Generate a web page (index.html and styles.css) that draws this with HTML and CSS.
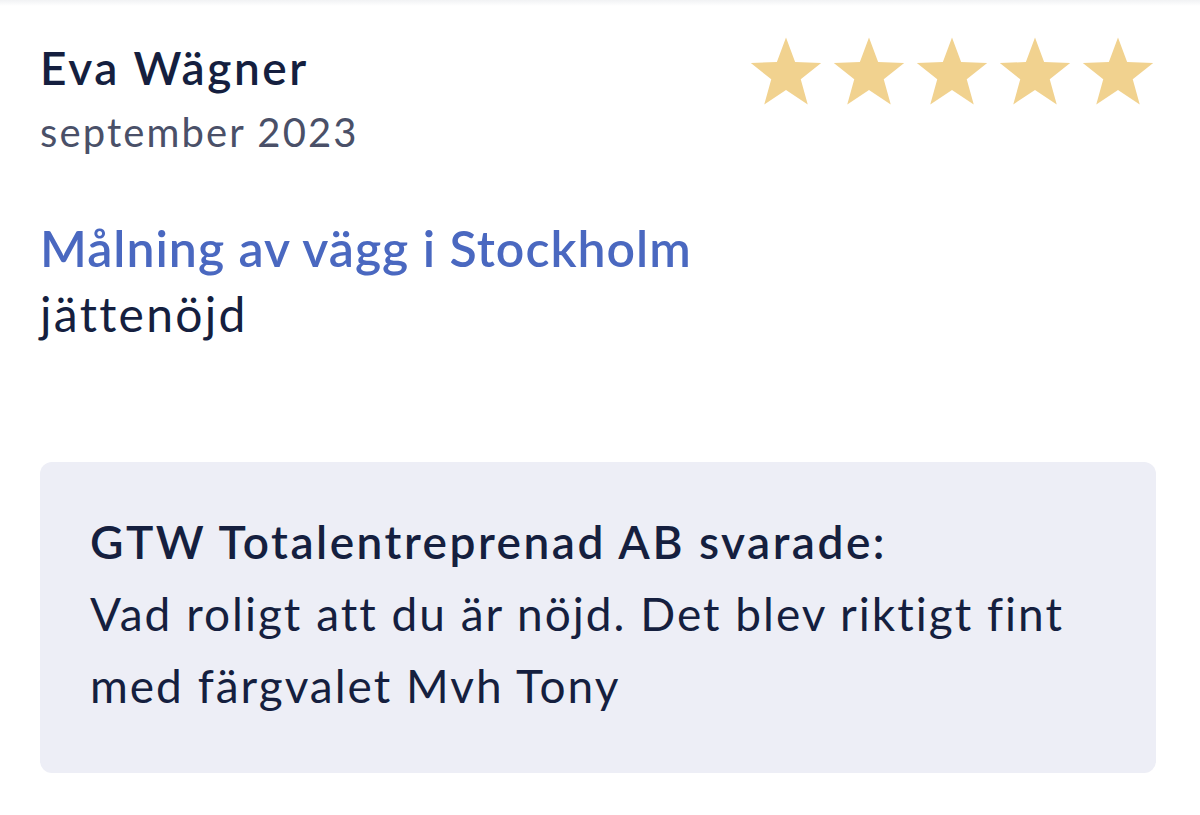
FILE: index.html
```html
<!DOCTYPE html>
<html lang="sv">
<head>
<meta charset="utf-8">
<link rel="stylesheet" href="styles.css">
</head>
<body>
<div class="topline"></div>
<article class="review">
  <header class="review-head">
    <div class="author">
      <div class="name">Eva Wägner</div>
      <div class="date">september 2023</div>
    </div>
    <div class="stars">
      <svg class="star" viewBox="0 0 72 68"><path d="M36 0.5L45.11 24.96L71.19 26.07L50.74 42.29L57.75 67.43L36 53L14.25 67.43L21.26 42.29L0.81 26.07L26.89 24.96Z"/></svg>
      <svg class="star" viewBox="0 0 72 68"><path d="M36 0.5L45.11 24.96L71.19 26.07L50.74 42.29L57.75 67.43L36 53L14.25 67.43L21.26 42.29L0.81 26.07L26.89 24.96Z"/></svg>
      <svg class="star" viewBox="0 0 72 68"><path d="M36 0.5L45.11 24.96L71.19 26.07L50.74 42.29L57.75 67.43L36 53L14.25 67.43L21.26 42.29L0.81 26.07L26.89 24.96Z"/></svg>
      <svg class="star" viewBox="0 0 72 68"><path d="M36 0.5L45.11 24.96L71.19 26.07L50.74 42.29L57.75 67.43L36 53L14.25 67.43L21.26 42.29L0.81 26.07L26.89 24.96Z"/></svg>
      <svg class="star" viewBox="0 0 72 68"><path d="M36 0.5L45.11 24.96L71.19 26.07L50.74 42.29L57.75 67.43L36 53L14.25 67.43L21.26 42.29L0.81 26.07L26.89 24.96Z"/></svg>
    </div>
  </header>
  <h2 class="title">Målning av vägg i Stockholm</h2>
  <p class="text">jättenöjd</p>
  <div class="reply">
    <div class="reply-by">GTW Totalentreprenad AB svarade:</div>
    <p class="reply-text">Vad roligt att du är nöjd. Det blev riktigt fint med färgvalet Mvh Tony</p>
  </div>
</article>
</body>
</html>
```
FILE: styles.css
```css
html, body {
  margin: 0;
  padding: 0;
  background: #ffffff;
}
body {
  font-family: "Lato", "Noto Sans", sans-serif;
  color: #151f3f;
}
.topline {
  height: 6px;
  background: linear-gradient(#f1f2f4, #ffffff);
}
.review {
  padding: 0 44px 0 40px;
}
.review-head {
  display: flex;
  justify-content: space-between;
  align-items: flex-start;
}
.name {
  font-size: 46px;
  font-weight: 600;
  line-height: 64px;
  letter-spacing: 2.6px;
  margin-top: 30px;
}
.date {
  font-size: 40px;
  color: #4a5068;
  line-height: 64px;
  letter-spacing: 2.1px;
}
.stars {
  display: flex;
  gap: 11px;
  margin-top: 31px;
  margin-right: 2px;
}
.star {
  width: 72px;
  height: 68px;
  fill: #f1d28f;
}
.title {
  margin: 49px 0 0;
  font-size: 50px;
  font-weight: 600;
  color: #4a68c0;
  line-height: 70px;
  letter-spacing: 1px;
}
.text {
  margin: 0;
  font-size: 48px;
  line-height: 62px;
  letter-spacing: 2.3px;
}
.reply {
  margin-top: 117px;
  background: #edeef6;
  border-radius: 12px;
  padding: 44px 50px 51px;
}
.reply-by {
  font-size: 46px;
  font-weight: 600;
  line-height: 72px;
  letter-spacing: 2.5px;
}
.reply-text {
  margin: 0;
  font-size: 46px;
  line-height: 72px;
  letter-spacing: 2px;
}
```
